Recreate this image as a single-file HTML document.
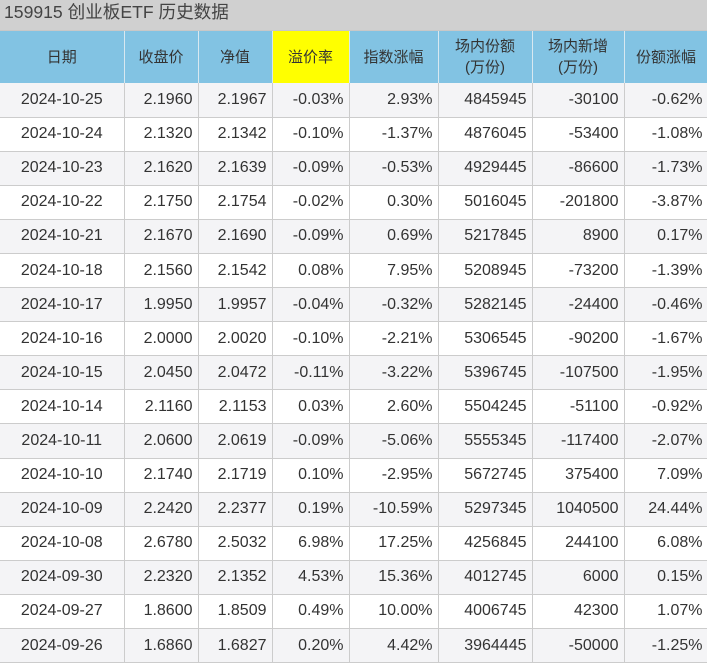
<!DOCTYPE html>
<html><head><meta charset="utf-8"><style>
*{margin:0;padding:0;box-sizing:border-box}
body{width:707px;height:664px;overflow:hidden;background:#fff;font-family:"Liberation Sans","Noto Sans CJK SC",sans-serif;color:#333}
.t{height:31px;background:#d0d0d0;font-size:17.6px;line-height:25px;padding-left:4px;color:#444;border-bottom:1px solid #c8c8c8}
table{border-collapse:collapse;table-layout:fixed;width:708px;position:absolute;top:31px;left:0}
th{background:#82c3e3;font-weight:normal;font-size:15px;line-height:21px;height:52px;border-right:1px solid #d8e8f0;color:#333;text-align:center}
th.y{background:#ffff00}
td{height:34.1px;border-right:1px solid #ccc;border-bottom:1px solid #ccc;font-size:16px;text-align:right;padding-right:5px}
td:first-child{text-align:center;padding-right:0}
tr:nth-child(even) td{background:#f4f4f6}
</style></head><body>
<div class="t">159915 创业板ETF 历史数据</div>
<table>
<colgroup><col style="width:124px"><col style="width:74px"><col style="width:74px"><col style="width:77px"><col style="width:89px"><col style="width:94px"><col style="width:92px"><col style="width:84px"></colgroup>
<tr><th>日期</th><th>收盘价</th><th>净值</th><th class="y">溢价率</th><th>指数涨幅</th><th>场内份额<br>(万份)</th><th>场内新增<br>(万份)</th><th>份额涨幅</th></tr>
<tr><td>2024-10-25</td><td>2.1960</td><td>2.1967</td><td>-0.03%</td><td>2.93%</td><td>4845945</td><td>-30100</td><td>-0.62%</td></tr>
<tr><td>2024-10-24</td><td>2.1320</td><td>2.1342</td><td>-0.10%</td><td>-1.37%</td><td>4876045</td><td>-53400</td><td>-1.08%</td></tr>
<tr><td>2024-10-23</td><td>2.1620</td><td>2.1639</td><td>-0.09%</td><td>-0.53%</td><td>4929445</td><td>-86600</td><td>-1.73%</td></tr>
<tr><td>2024-10-22</td><td>2.1750</td><td>2.1754</td><td>-0.02%</td><td>0.30%</td><td>5016045</td><td>-201800</td><td>-3.87%</td></tr>
<tr><td>2024-10-21</td><td>2.1670</td><td>2.1690</td><td>-0.09%</td><td>0.69%</td><td>5217845</td><td>8900</td><td>0.17%</td></tr>
<tr><td>2024-10-18</td><td>2.1560</td><td>2.1542</td><td>0.08%</td><td>7.95%</td><td>5208945</td><td>-73200</td><td>-1.39%</td></tr>
<tr><td>2024-10-17</td><td>1.9950</td><td>1.9957</td><td>-0.04%</td><td>-0.32%</td><td>5282145</td><td>-24400</td><td>-0.46%</td></tr>
<tr><td>2024-10-16</td><td>2.0000</td><td>2.0020</td><td>-0.10%</td><td>-2.21%</td><td>5306545</td><td>-90200</td><td>-1.67%</td></tr>
<tr><td>2024-10-15</td><td>2.0450</td><td>2.0472</td><td>-0.11%</td><td>-3.22%</td><td>5396745</td><td>-107500</td><td>-1.95%</td></tr>
<tr><td>2024-10-14</td><td>2.1160</td><td>2.1153</td><td>0.03%</td><td>2.60%</td><td>5504245</td><td>-51100</td><td>-0.92%</td></tr>
<tr><td>2024-10-11</td><td>2.0600</td><td>2.0619</td><td>-0.09%</td><td>-5.06%</td><td>5555345</td><td>-117400</td><td>-2.07%</td></tr>
<tr><td>2024-10-10</td><td>2.1740</td><td>2.1719</td><td>0.10%</td><td>-2.95%</td><td>5672745</td><td>375400</td><td>7.09%</td></tr>
<tr><td>2024-10-09</td><td>2.2420</td><td>2.2377</td><td>0.19%</td><td>-10.59%</td><td>5297345</td><td>1040500</td><td>24.44%</td></tr>
<tr><td>2024-10-08</td><td>2.6780</td><td>2.5032</td><td>6.98%</td><td>17.25%</td><td>4256845</td><td>244100</td><td>6.08%</td></tr>
<tr><td>2024-09-30</td><td>2.2320</td><td>2.1352</td><td>4.53%</td><td>15.36%</td><td>4012745</td><td>6000</td><td>0.15%</td></tr>
<tr><td>2024-09-27</td><td>1.8600</td><td>1.8509</td><td>0.49%</td><td>10.00%</td><td>4006745</td><td>42300</td><td>1.07%</td></tr>
<tr><td>2024-09-26</td><td>1.6860</td><td>1.6827</td><td>0.20%</td><td>4.42%</td><td>3964445</td><td>-50000</td><td>-1.25%</td></tr>
</table>
</body></html>
